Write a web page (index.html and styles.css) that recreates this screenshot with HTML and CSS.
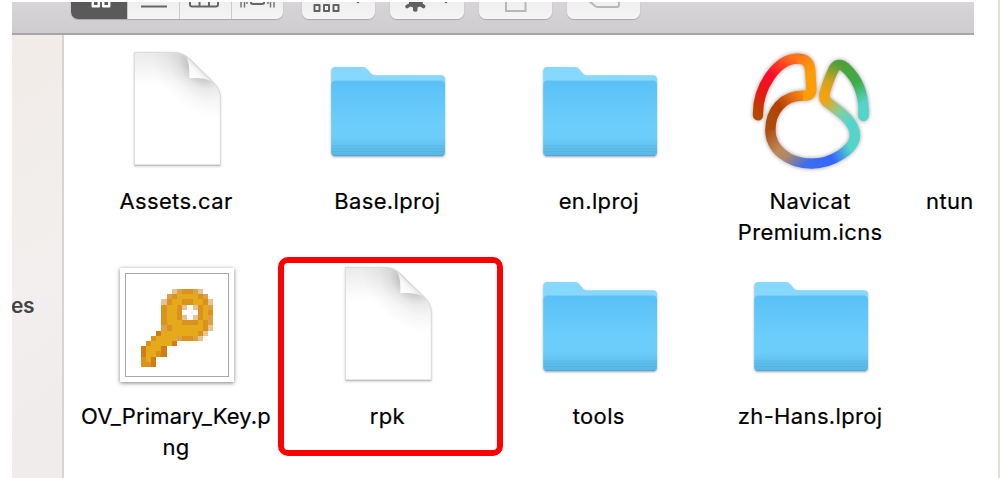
FILE: index.html
```
<!DOCTYPE html>
<html lang="en">
<head>
<meta charset="utf-8">
<title>Resources</title>
<link rel="stylesheet" href="styles.css">
</head>
<body>
<svg class="defs" width="0" height="0" aria-hidden="true">
  <defs>
    <radialGradient id="page" gradientUnits="userSpaceOnUse" cx="0" cy="0" r="150" gradientTransform="translate(270 84) rotate(45) scale(1.2 .8)">
      <stop offset="0" stop-color="#c2c2c2"/><stop offset=".25" stop-color="#d2d2d2"/><stop offset=".42" stop-color="#e9e9e9"/><stop offset=".65" stop-color="#f6f6f6"/><stop offset="1" stop-color="#fff"/>
    </radialGradient>
    <linearGradient id="top" x1="0" y1="0" x2="0" y2="1">
      <stop offset="0" stop-color="#000" stop-opacity=".08"/><stop offset=".3" stop-color="#000" stop-opacity="0"/>
    </linearGradient>
    <linearGradient id="fold" gradientUnits="userSpaceOnUse" x1="238" y1="115" x2="270" y2="83">
      <stop offset="0" stop-color="#fff"/><stop offset=".6" stop-color="#fafafa"/><stop offset="1" stop-color="#e2e2e2"/>
    </linearGradient>
    <linearGradient id="front" x1="0" y1="0" x2="0" y2="1">
      <stop offset="0" stop-color="#59c1f6"/><stop offset=".6" stop-color="#6dcefb"/><stop offset=".75" stop-color="#6dcdf9"/><stop offset=".87" stop-color="#62c1ee"/><stop offset="1" stop-color="#58b5e6"/>
    </linearGradient>
    <symbol id="document" viewBox="21 27 360 360">
      <path d="M73 37H190C213 37 226 45 240 58L303 119C321 137 331 150 331 176V375H73Z" fill="url(#page)"/>
      <path d="M73 37H190C213 37 226 45 240 58L303 119C321 137 331 150 331 176V375H73Z" fill="url(#top)" stroke="#d9d9d9" stroke-width="3"/>
      <path d="M225 47C237 60 239 82 238 115C270 112 292 117 307 125L240 60Z" fill="url(#fold)"/>
      <path d="M73 376H331" stroke="#bdbdbd" stroke-width="3"/>
    </symbol>
    <symbol id="folder" viewBox="26 -18 360 360">
      <path d="M36 48Q36 36 48 36H130Q139 36 144 43L155 56Q160 61 168 61H365Q377 61 377 73V292Q377 303 366 303H47Q36 303 36 292Z" fill="#87d8ff"/>
      <path d="M36 89Q36 77 48 77H365Q377 77 377 89V292Q377 303 366 303H47Q36 303 36 292Z" fill="url(#front)"/>
      <path d="M44 77.500H369" stroke="#70c4ee" stroke-width="1.500"/>
      <path d="M36 273H377M36 281H377M36 289H377" stroke="#4ea9dc" stroke-width="2" opacity=".65"/>
      <path d="M42 302H371" stroke="#50a5d2" stroke-width="3"/>
    </symbol>
  </defs>
</svg>
<div class="window">
  <header class="toolbar">
    <div class="segmented">
      <span class="segment active"><svg width="24" height="18" viewBox="0 0 24 18"><path d="M3.800-2h6v6.200h-6zM14.200-2h6v6.200h-6z" fill="none" stroke="#fff" stroke-width="2.500" stroke-linejoin="round"/></svg></span>
      <span class="segment"><svg width="28" height="18" viewBox="0 0 28 18"><path d="M1 4.500h26" stroke="#666" stroke-width="2"/></svg></span>
      <span class="segment columns"><svg width="30" height="18" viewBox="0 0 30 18"><path d="M1-2V2.500q0 2 2 2h24q2 0 2-2V-2M10.500-2v6M20-2v6" fill="none" stroke="#666" stroke-width="2"/></svg></span>
      <span class="segment"><svg width="36" height="18" viewBox="0 0 36 18"><path d="M1 0v5.500M34 0v5.500" stroke="#777" stroke-width="1.500"/><path d="M4.500 0v5.500M30.500 0v5.500" stroke="#777" stroke-width="1.500"/><path d="M7 0v2M28 0v2" stroke="#777" stroke-width="1.500"/><path d="M11-2V.5q0 1.500 2 1.500h9q2 0 2-1.500v-3" fill="none" stroke="#666" stroke-width="2"/></svg></span>
    </div>
    <span class="button"><svg width="73" height="18" viewBox="0 0 73 18"><path d="M12.500 3h5v6h-5zM22 3h5v6h-5zM31.500 3h5v6h-5z" fill="none" stroke="#616161" stroke-width="2" stroke-linejoin="round"/><path d="M54.500 0h3l-1.500 1.500z" fill="#555"/></svg></span>
    <span class="button"><svg width="73" height="18" viewBox="0 0 73 18"><path d="M19 0H33L32.500 1.500L35 3Q36 4 35 5.500Q34 7 32.500 6L30 4.500L27.500 5.500V8.500Q27 9.800 25.500 9.800Q23.500 9.800 23 8.500V5.500L20.500 4.500L18 6Q16.500 7 15.500 5.500Q14.500 4 16 3L19 1.500Z" fill="#616161"/><path d="M54.500 0h3l-1.500 1.500z" fill="#555"/></svg></span>
    <span class="button"><svg width="73" height="18" viewBox="0 0 73 18"><path d="M27-1V9H46.500V-1" fill="none" stroke="#b7b7b7" stroke-width="2"/></svg></span>
    <span class="button"><svg width="73" height="18" viewBox="0 0 73 18"><path d="M22-1l6 5q1.500 1 3 1H50q2 0 2-2v-4" fill="none" stroke="#b7b7b7" stroke-width="2"/></svg></span>
  </header>
  <div class="body">
    <aside class="sidebar"><span class="sidebar-item">es</span></aside>
    <main class="files">
      <div class="file">
        <svg class="icon paper" viewBox="0 0 120 120"><use href="#document" width="120" height="120"/></svg>
        <span class="name">Assets.car</span>
      </div>
      <div class="file">
        <svg class="icon shaded" viewBox="0 0 120 120"><use href="#folder" width="120" height="120"/></svg>
        <span class="name">Base.lproj</span>
      </div>
      <div class="file">
        <svg class="icon shaded" viewBox="0 0 120 120"><use href="#folder" width="120" height="120"/></svg>
        <span class="name">en.lproj</span>
      </div>
      <div class="file">
        <svg class="icon glow" viewBox="48 27 360 360" fill="none" stroke-width="31" stroke-linejoin="round">
          <defs>
            <linearGradient id="a" gradientUnits="userSpaceOnUse" x1="69" y1="230" x2="187" y2="56"><stop offset=".03" stop-color="#b44800"/><stop offset=".3" stop-color="#e61a12"/><stop offset=".6" stop-color="#ff0a2b"/><stop offset="1" stop-color="#ff751c"/></linearGradient>
            <linearGradient id="b" gradientUnits="userSpaceOnUse" x1="185" y1="56" x2="229" y2="95"><stop stop-color="#ff751c"/><stop offset="1" stop-color="#ff9d00"/></linearGradient>
            <linearGradient id="c" gradientUnits="userSpaceOnUse" x1="225" y1="160" x2="110" y2="240"><stop stop-color="#ff9d00"/><stop offset=".35" stop-color="#e66c14"/><stop offset=".7" stop-color="#b43f00"/><stop offset="1" stop-color="#ad4b0c"/></linearGradient>
            <linearGradient id="d" gradientUnits="userSpaceOnUse" x1="106" y1="260" x2="210" y2="375"><stop stop-color="#ad4b0c"/><stop offset=".45" stop-color="#bd895a"/><stop offset=".65" stop-color="#a98670"/><stop offset="1" stop-color="#3d6df0"/></linearGradient>
            <linearGradient id="e" gradientUnits="userSpaceOnUse" x1="225" y1="370" x2="345" y2="310"><stop stop-color="#3c6df2"/><stop offset=".5" stop-color="#3167ff"/><stop offset=".95" stop-color="#54d5ca"/></linearGradient>
            <linearGradient id="f" gradientUnits="userSpaceOnUse" x1="350" y1="245" x2="272" y2="175"><stop stop-color="#54d5ca"/><stop offset=".45" stop-color="#83cfa0"/><stop offset="1" stop-color="#f4a20e"/></linearGradient>
            <linearGradient id="g" gradientUnits="userSpaceOnUse" x1="270" y1="165" x2="315" y2="75"><stop stop-color="#f6a20b"/><stop offset=".4" stop-color="#d3a31c"/><stop offset="1" stop-color="#4fa038"/></linearGradient>
            <linearGradient id="h" gradientUnits="userSpaceOnUse" x1="312" y1="75" x2="388" y2="205"><stop stop-color="#4ca136"/><stop offset=".48" stop-color="#3fac49"/><stop offset=".9" stop-color="#54d5ca"/></linearGradient>
          </defs>
          <path d="M69 226C67 142 126 56 188 56" stroke="url(#a)" stroke-linecap="round"/>
          <path d="M187 56C216 56 225 72 226 94L229 145C230 163 225 167 202 167" stroke="url(#b)"/>
          <path d="M204 167C145 167 106 210 106 272" stroke="url(#c)"/>
          <path d="M106 269C106 325 157 371 231 371" stroke="url(#d)"/>
          <path d="M230 371C290 371 360 328 360 286" stroke="url(#e)"/>
          <path d="M360 288C361 249 320 218 280 190Q264 178 269 162" stroke="url(#f)"/>
          <path d="M268 166C270 150 286 107 294 92C301 73 316 69 331 83" stroke="url(#g)"/>
          <path d="M328 80C368 115 389 166 385 228" stroke="url(#h)"/>
          <path d="M386 215L385 228" stroke="#54d5ca" stroke-linecap="round"/>
        </svg>
        <span class="name">Navicat<br>Premium.icns</span>
      </div>
      <div class="file cut"><span class="name">ntun</span></div>
      <div class="file">
        <span class="icon picture">
          <svg class="key" viewBox="0 0 14 15" shape-rendering="crispEdges">
            <path stroke="#e5aa1b" d="M6 1.500h6M5 2.500h8M5 3.500h8M5 4.500h8M5 5.500h8M5 6.500h8M5 7.500h8M4 8.500h8M3 9.500h4M2 10.500h4M1 11.500h3M1 12.500h2M1 13.500h1M1 14.500h1"/>
            <path stroke="#da921c" d="M8 .5h2M6 1.500h1M11 1.500h1M5 2.500h1M8 2.500h2M12 2.500h1M4 3.500h1M7 3.500h1M11 3.500h1M4 4.500h1M7 4.500h1M11 4.500h1M13 4.500h1M4 5.500h1M7 5.500h1M11 5.500h1M4 6.500h1M8 6.500h3M12 6.500h1M5 7.500h1M12 7.500h1M3 8.500h1M11 8.500h1M2 9.500h1M8 9.500h2M1 10.500h1M3 12.500h1M0 13.500h1M0 14.500h2"/>
            <path stroke="#dca148" d="M7 .5h1M10 .5h1M5 1.500h1M12 1.500h1M13 3.500h1M13 5.500h1M13 6.500h1M4 7.500h1M7 9.500h1M10 9.500h1"/>
            <path stroke="#e6c392" d="M6 .5h1M11 .5h1M4 2.500h1M13 2.500h1M8 3.500h1M10 3.500h1M8 5.500h1M10 5.500h1M13 7.500h1M12 8.500h1M11 9.500h1"/>
            <path stroke="#d17d17" d="M3 8.500h1M6 10.500h1M0 11.500h1M4 11.500h1M0 12.500h1M4 12.500h1M2 13.500h1M2 14.500h1"/>
            <path stroke="#fff" d="M9 3.500h1M8 4.500h3M9 5.500h1"/>
          </svg>
        </span>
        <span class="name tight">OV_Primary_Key.p<br>ng</span>
      </div>
      <div class="file marked">
        <svg class="icon paper" viewBox="0 0 120 120"><use href="#document" width="120" height="120"/></svg>
        <span class="name">rpk</span>
      </div>
      <div class="file">
        <svg class="icon shaded" viewBox="0 0 120 120"><use href="#folder" width="120" height="120"/></svg>
        <span class="name">tools</span>
      </div>
      <div class="file">
        <svg class="icon shaded" viewBox="0 0 120 120"><use href="#folder" width="120" height="120"/></svg>
        <span class="name">zh-Hans.lproj</span>
      </div>
    </main>
  </div>
</div>
<div class="edge"></div>
</body>
</html>
```
FILE: styles.css
```
*, *::after { box-sizing: border-box; }
body {
  margin: 0;
  height: 478px;
  display: flex;
  justify-content: space-between;
  overflow: hidden;
  background: #fff;
  color: #000;
  font-family: Inter, "Liberation Sans", sans-serif;
}
.defs { position: absolute; }
.window {
  width: 962px;
  height: 476px;
  margin: 2px 0 0 12px;
  display: flex;
  flex-direction: column;
  overflow: hidden;
}
.toolbar {
  height: 33px;
  flex: none;
  display: flex;
  align-items: flex-start;
  gap: 15px;
  padding-left: 59px;
  background: linear-gradient(#d7d5d8, #cfccd0);
  border-bottom: 2px solid #a8a5a8;
}
.segmented, .button {
  height: 17px;
  border-radius: 0 0 7px 7px;
  background: linear-gradient(#f0eff0, #f5f5f5);
  box-shadow: 0 1px 1px #aaa8aa, 0 0 1px #bbb;
  overflow: hidden;
}
.segmented { display: flex; width: 212px; margin-right: 4px; }
.segment {
  flex: 0 0 52px;
  display: flex;
  justify-content: center;
  border-left: 1px solid #cbc9cb;
}
.segment.active {
  flex-basis: 56px;
  padding-left: 3px;
  background: #5a5a5a;
  border-left: 0;
}
.segment.columns { padding-right: 3px; }
.segment svg, .button svg { display: block; }
.button { width: 73.300px; }
.body { flex: 1; display: flex; min-height: 0; }
.sidebar {
  width: 52px;
  flex: none;
  padding-top: 257px;
  background: linear-gradient(150deg, #f1ece8, #f2efee 55%, #f0ebeb);
  border-right: 2px solid #d9d4d4;
}
.sidebar-item {
  display: block;
  margin-left: -1px;
  font-size: 21px;
  line-height: 28px;
  letter-spacing: -.3px;
  font-weight: 600;
  color: #444;
}
.files {
  flex: 1;
  display: grid;
  grid-template-columns: repeat(4, 211.400px) 57px;
  grid-template-rows: 215px 214px;
  padding: 14px 0 0 7.300px;
}
.file {
  position: relative;
  display: flex;
  flex-direction: column;
  align-items: center;
}
.icon { width: 120px; height: 120px; display: block; overflow: visible; }
.paper { filter: drop-shadow(0 1px 1px rgba(0, 0, 0, .15)); }
.shaded { filter: drop-shadow(0 1px 1px rgba(0, 0, 0, .3)); }
.glow { filter: drop-shadow(0 0 2px rgba(0, 0, 0, .4)); }
.picture {
  width: 114px;
  height: 114px;
  margin: 4px 0 2px;
  padding: 5px;
  background: #fff;
  box-shadow: 0 1px 4px rgba(0, 0, 0, .5);
}
.key {
  display: block;
  width: 104px;
  height: 104px;
  padding: 15px 14px 9px;
  border: 1px solid #aaa;
}
.name {
  margin: 17px 2px 0 0;
  font-size: 22px;
  line-height: 30.500px;
  letter-spacing: .35px;
  text-align: center;
  white-space: nowrap;
  -webkit-text-stroke: .2px #000;
}
.name.tight { letter-spacing: .15px; }
.cut { align-items: flex-start; padding: 120px 0 0 9.200px; }
.marked::after {
  content: "";
  position: absolute;
  left: -4.700px;
  top: -7px;
  width: 225px;
  height: 199px;
  border: 6px solid #fe0000;
  border-radius: 10px;
}
.edge { width: 2px; background: #dfe2cc; }
```
